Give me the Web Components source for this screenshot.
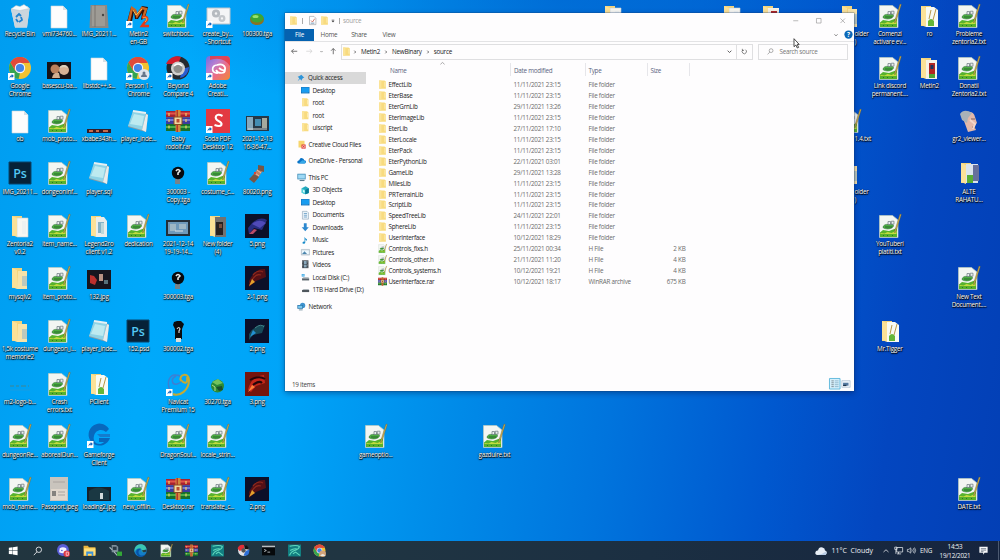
<!DOCTYPE html>
<html lang="en">
<head>
<meta charset="utf-8">
<title>Desktop</title>
<style>
  body {
    margin: 0;
    width: 1000px;
    height: 560px;
    overflow: hidden;
    font-family: "Open Sans", "Noto Sans", sans-serif;
    font-size: 6.3px;
    letter-spacing: -.25px;
  }
</style>
</head>
<body>
<desk-top>
  <explorer-window slot="window"></explorer-window>
  <task-bar slot="taskbar"></task-bar>
</desk-top>

<script>
(() => {
  const folderBack = `<path d="M4 2h7v20l-7-1.500z" fill="#e9c766"/><path d="M4 2h10v20H4z" fill="#f3d37b"/>`;
  const shortcut = `<path d="M0 17h6.500v7H0z" fill="#fff"/><path d="M1.500 22.500c0-2 .8-3 2.200-3.200v-1.300l2.200 2-2.200 2v-1.200c-1 0-1.600.5-2.200 1.700z" fill="#1668c0"/>`;
  const chrome = `<circle cx="12" cy="12" r="11" fill="#f1c232"/><path d="M2.500 6.500A11 11 0 0 1 21.500 6.500H12z" fill="#e04a3a"/><path d="M2.500 6.500 7.300 14.800 12 17l-1.500 5.900A11 11 0 0 1 2.500 6.500z" fill="#35a552"/><path d="M2.500 6.500 7.500 15 12 7h9.500a11 11 0 0 0-19-.5z" fill="#e04a3a"/><circle cx="12" cy="12" r="5.200" fill="#f4f6fa"/><circle cx="12" cy="12" r="4.100" fill="#4385e8"/>`;
  const rar = `<path d="M0 2h24v6.500H0z" fill="#a82230"/><path d="M0 3.500h24v2H0z" fill="#e2564c"/><path d="M0 8.500h24V15H0z" fill="#3c3ca0"/><path d="M0 10h24v2H0z" fill="#6f7bd8"/><path d="M0 15h24v7H0z" fill="#14702c"/><path d="M0 17h24v2H0z" fill="#4fb04a"/><path d="M9.500 1h5v22h-5z" fill="#d08a3c"/><path d="M10.500 1h1.500v22h-1.500z" fill="#b7372a"/><path d="M8 8h8v7.500H8z" fill="#f0d8a0" stroke="#8a4d22"/><path d="M10.500 10h3v3.500h-3z" fill="#ba4d32"/><path d="M3 4v3M3 10v3M3 16.500v3M20 4v3M20 10v3M20 16.500v3" stroke="#f4cf67" stroke-width="1.200"/>`;
  const npp = `<path d="M1.500 1.500h13l5.500 4.500v17.500H1.500z" fill="#f3f6f2" stroke="#bccbc0" stroke-width=".7"/><path d="M2 18.500 5 16l6 1 8-3v9H2z" fill="#58b22c"/><path d="M2.500 19l4 .5 3-1.500 4 1 5-2.500V20H2.500z" fill="#c3dc3e"/><path d="M5 13.500c0-2.500 3-3.500 5-3 3-1.500 5.500-.5 5.500 1.500-1 3-7.500 4-10.500 1.500z" fill="#4cae42" stroke="#28702e" stroke-width=".6"/><path d="M10 7.500h2.500v3H10zM13.300 7.200h2.700v3h-2.700z" fill="#e8efed" stroke="#68757b" stroke-width=".7"/><path d="M7 13h7" stroke="#1d552a" stroke-width=".8"/><path d="M23.300.6 18 17l-1.300 2 .3-3L22 0z" fill="#d8b348" stroke="#5f5b3b" stroke-width=".4"/><path d="M5 21.500h1M9 21.500h1M14 21.500h1" stroke="#2f7322"/>`;
  const photo = (inner) => `<path d="M0 0h24v24H0z" fill="#0c1029"/>${inner}`;
  const folder = (inner) => `${folderBack}${inner}<path d="M4 2l5 2v19l-5-2z" fill="#fbe197"/>`;

  // every drawing sits on a 24x24 box
  const ICONS = {
    npp,
    rar,
    chrome: chrome + shortcut,
    bin: `<path d="M3 5 19 2l2.500 2.500L19 23.500H7z" fill="#e3e9ee"/><path d="M3 5l9 1.500 9.500-2L19 23.500H7z" fill="#cbd5dd"/><path d="M3 5l5-3.500 4 1 4-2 5.500 4-9.500 2z" fill="#f8fafb" stroke="#aebcc7" stroke-width=".5"/><path d="M8 13l3-3 2 2M13 13l1 3-3 2M10 18l-2-3" fill="none" stroke="#2383d0" stroke-width="1.800"/>`,
    file: `<path d="M4 2h12l4 4v18H4z" fill="#fdfdfd" stroke="#cbd6de" stroke-width=".6"/><path d="M16 2v4h4z" fill="#d6dfe5"/>`,
    scan: `<path d="M3.500 1H20l1.500 23h-19z" fill="#8c8985"/><path d="M5 2h13v20H5z" fill="#9e9b95"/><path d="M8 1v22" stroke="#716d67" stroke-width=".8"/><circle cx="16" cy="11" r="1.200" fill="#474544"/>`,
    metin: `<path d="M1 18 5 3l5 3 1 4 5-8 6 1-3 11-4 2 1-7-4 6h-3L8 8l-2 9z" fill="#331007"/><path d="M3 17 6 4l3 2 2 6 5-8 4 1-3 9" fill="none" stroke="#c96524" stroke-width="2.400"/><path d="M7 6l3 5 6-6" stroke="#f1bd51" fill="none"/><path d="M16 14c5-3 7 1 3 4l-3 4h7" fill="none" stroke="#e43b18" stroke-width="2.500"/><path d="M17 14c4-2 5 1 2 4" fill="none" stroke="#ffb33e"/>${shortcut}`,
    gears: `<path d="M1 4h23v16H1z" fill="#f4f5f6" stroke="#b9c3cb"/><circle cx="10" cy="9.500" r="2.700" fill="none" stroke="#b6bbc0" stroke-width="2.800"/><circle cx="16" cy="14.500" r="2.300" fill="none" stroke="#c3c7cb" stroke-width="2.300"/>${shortcut}`,
    green: `<ellipse cx="12" cy="15.500" rx="7" ry="5.500" fill="#8a7224"/><ellipse cx="12" cy="14" rx="6.500" ry="4.500" fill="#3ca536"/><ellipse cx="10.500" cy="12.500" rx="3" ry="1.500" fill="#96e36d"/>`,
    faces: `<path d="M0 6h24v17H0z" fill="#171216"/><circle cx="8" cy="13" r="4.500" fill="#ba815e"/><path d="M5 22q1-6 7-5l1 5z" fill="#d1ae91"/><circle cx="17" cy="14" r="5" fill="#d7b296"/><path d="M12 12c2-4 8-4 9 0l-4-1z" fill="#ddd2bd"/>`,
    person: `${chrome}<circle cx="18" cy="18.500" r="5.500" fill="#dfe4ec"/><circle cx="18" cy="17" r="1.500" fill="#66758a"/><path d="M15 21c0-4 6-4 6 0z" fill="#66758a"/>${shortcut}`,
    compare: `<circle cx="12" cy="12" r="11.500" fill="#252a2f"/><path d="M0 8A12 12 0 0 1 15 1l-3 7z" fill="#d31f2e"/><path d="M14 22a11 11 0 0 0 9-11l-7 2z" fill="#295ed2"/><circle cx="12" cy="12.500" r="7" fill="#d0d0ce"/><circle cx="12" cy="12.500" r="4.500" fill="#8d8e8b"/><path d="M8 10q4-4 8 0" stroke="#fff" stroke-width="1.500" fill="none"/>${shortcut}`,
    adobe: `<defs><linearGradient id="a" x2="1" y2="1"><stop stop-color="#6d6be0"/><stop offset=".35" stop-color="#b97fd0"/><stop offset=".6" stop-color="#ec6c86"/><stop offset="1" stop-color="#f08a34"/></linearGradient></defs><rect width="24" height="24" rx="4" fill="url(#a)"/><path d="M4 0h16q4 0 4 4v6Q17 0 4 4z" fill="#e43d45" opacity=".85"/><path d="M12 17c-7 1-7-8-1-8 5-2 9 1 8 5 0 4-7 4-9 0m3-2q5 4 6 1" fill="none" stroke="#fff" stroke-width="1.700"/>${shortcut}`,
    banner: `<path d="M0 20h24v4H0z" fill="#331c28"/><path d="M2 21h4v2H2zM9 21h3v2H9zM16 21h5v2h-5z" fill="#c66b4d"/>`,
    notes: `<path d="M7 2l15 3-2 18-18-5z" fill="#8a9ca5"/><path d="M7 2l13 2-4 17-14-4z" fill="#8fd3e6"/><path d="M8 5l10 2-2 10-12-2z" fill="#bdeaf0"/><path d="M7 2l13 2" stroke="#e6f0f3" stroke-width="2"/><path d="M20 5l2 1-2 17-4-2z" fill="#e8ecec"/>`,
    soda: `<path d="M0 0h24v24H0z" fill="#e23a42"/><path d="M16.500 7c-7-4-9 3-4 5s4 7-4 4" fill="none" stroke="#fff" stroke-width="2.100"/>${shortcut}`,
    shot: `<path d="M1 7h23v15H1z" fill="#273846"/><path d="M2 8h6v13H2z" fill="#86a9bd"/><path d="M10 10h6v7h-6z" fill="#438db3"/><path d="M17 9h5v10h-5z" fill="#a7a99d"/><path d="M3 20h19" stroke="#d5d7d5"/>`,
    shot2: `<path d="M0 6h24v16H0z" fill="#222f39"/><path d="M2 8h20v12H2z" fill="#6e99ba"/><path d="M4 10h6v7H4zM13 10h7v5h-7z" fill="#9db7c5"/><path d="M9 17h8" stroke="#dae1e5"/>`,
    ps: `<path d="M1 1h22v22H1z" fill="#062238" stroke="#07446c" stroke-width="1"/><text x="12" y="16.500" text-anchor="middle" font-family="Open Sans" font-weight="600" font-size="12.500" fill="#54c9f4">Ps</text>`,
    orb: `<path d="M9 18h5v5H9z" fill="#76838a"/><circle cx="12" cy="12" r="6.200" fill="#080a0e"/><path d="M10 10q2-3 4 0l-2 2v2" fill="none" stroke="#e7e7e5" stroke-width="1.600"/>`,
    totem: `<path d="M5 18 15 5l4 3-9 13z" fill="#b98368"/><path d="M4 18l5-5 5 3-5 6zM13 4l6 1v6l-6-2z" fill="#765646"/><path d="M12 9l4 3M10 12l4 3" stroke="#f0baa0"/><path d="M9 11h2v2H9z" fill="#d8453a"/>`,
    folder: folder(`<path d="M10 5h9v18H9z" fill="#f7e3a9"/><path d="M14 10h5v10h-5z" fill="#bdc9bd"/>`),
    folderPaper: folder(`<path d="M9 4h11v19H9z" fill="#f7f7f2" stroke="#c9d0d2" stroke-width=".6"/><path d="M14 7h4v13h-4z" fill="#eef2f1"/>`),
    folderDocs: folder(`<path d="M9 3h8l3 4v16H9z" fill="#e9edeb"/><path d="M11 8h6v11h-6z" fill="#86b3c6"/><path d="M14 9h3v11h-3z" fill="#bbd8dc"/>`),
    folderDark: folder(`<path d="M9 3h11v20H9z" fill="#737270"/><path d="M10 8h7v13h-7z" fill="#272122"/><path d="M13 10h3v4h-3z" fill="#764d3d"/>`),
    folderNpp: folder(`<path d="M9 3h8l4 3v17H9z" fill="#f8faf3"/><path d="M11 17q3-4 6 0v5h-6z" fill="#64b638"/><path d="M19 5l-3 11M14 6l-2 9" stroke="#b79849"/>`),
    folderRed: folder(`<path d="M9 4h11v19H9z" fill="#f6f2e8"/><path d="M12 7h6v11h-6z" fill="#b32623"/><path d="M13.500 9h3v4h-3z" fill="#1b345e"/><path d="M12 18h6v4h-6z" fill="#4fa434"/>`),
    folderAlte: folder(`<path d="M9 3h12v19H9z" fill="#dbe4ed"/><path d="M16 4h6v16h-6z" fill="#66709c"/><path d="M10 14h6v8h-6z" fill="#5aad36"/>`),
    p5: photo(`<path d="M3 14Q12 1 22 6l-5 10-8-2-5 6z" fill="#282d82"/><path d="M7 10q7-6 14-1l-6 5z" fill="#504ab8"/><path d="M4 20l5-5 3 1-4 4z" fill="#b94c69"/>`),
    p24: photo(`<path d="M4 15Q10 2 20 3l1 8-10 4-7 6z" fill="#541015"/><path d="M8 9q5-6 10-3M7 14q4-7 9-5" stroke="#8f2a1d" stroke-width="1.200" fill="none"/><path d="M4 20l3-7 3 3z" fill="#e4a02c"/>`),
    p2: photo(`<path d="M4 15Q10 5 20 6l-3 8-9 2-4 5z" fill="#174a59"/><path d="M5 18l3-7 3 3z" fill="#238fd2"/><path d="M10 9q6-5 9-1" stroke="#428186" fill="none"/>`),
    p3: `<path d="M0 0h24v24H0z" fill="#75150d"/><path d="M3 18Q6 4 19 3l1 8-9 3-5 6z" fill="#c4271a"/><path d="M5 8q9-5 15-1M8 13q6-5 9-2" stroke="#23070b" stroke-width="2" fill="none"/><path d="M3 20l4-7 3 2z" fill="#ff813a"/>`,
    p132: `<path d="M0 4h24v19H0z" fill="#17151e"/><path d="M3 9l4 1 3 4-2 5-5-2z" fill="#bd302d"/><path d="M12 8h4v7h-4z" fill="#b99385"/><path d="M17 14h4v4h-4z" fill="#58717a"/>`,
    shirt: `<path d="M8 3l3-1h4l3 3-2 5v10H9V10L7 6z" fill="#0b0c0e"/><path d="M10 19h5v4h-5z" fill="#dcded9"/><path d="M11 10q2-3 3 0l-1 2v2" fill="none" stroke="#d4d4d4" stroke-width="1.200"/>`,
    logo: `<path d="M2 14h4M8 14h3M13 14h5M20 14h1" stroke="#2c8eb0" stroke-width="1.500"/><path d="M2 18h20" stroke="#229bd9" stroke-width=".7"/>`,
    navicat: `<path d="M4 18C0 10 4 2 10 3c6 0 8 7 1 9-5 1-7-5-1-8" fill="none" stroke="#3d7fd3" stroke-width="1.500"/><path d="M15 9c-3-7 8-9 8-1 0 10-9 17-16 14m8-14c4 5 7 3 6-3" fill="none" stroke="#c4ab32" stroke-width="2"/>${shortcut}`,
    emerald: `<circle cx="11.500" cy="14" r="6.500" fill="#2c8a35"/><path d="M6 10l6-3 5 4-6 2z" fill="#72c25d"/><path d="M10 15l6-1 1 4-4 1z" fill="#19502d"/><path d="M6 13l3 2v4" stroke="#b8dc89" fill="none"/>`,
    gforge: `<path d="M22 5A11 11 0 1 0 23 14H12v4h5c-5 5-12 0-10-6 1-6 8-8 12-4z" fill="#0868bd"/><path d="M10 10h13v3H13z" fill="#147ccd"/>${shortcut}`,
    passport: `<path d="M3 0h18v24H3z" fill="#c9c4bd"/><path d="M4 12h16v11H4z" fill="#e1d7cc"/><path d="M5 14h4v5H5z" fill="#85827e"/><path d="M11 15h7M11 18h7M6 5h12" stroke="#aaa4a0"/>`,
    loading: `<path d="M0 10h24v14H0z" fill="#16212b"/><path d="M2 14q9-7 20 0v9H2z" fill="#1a3843"/><path d="M13 16h3v6h-3z" fill="#d2dadc"/>`,
    granny: `<path d="M5 8Q5 3 9 3q8-1 9 5l2 6-3 3 2 4-8 2-4-11z" fill="#e3b9aa"/><path d="M3 5q4-6 12-1l-4 5-1 5-5-3z" fill="#a9b2b8"/><path d="M14 10h4M15 18l3 1" stroke="#80635e"/><path d="M13 11l5 4-2 5" fill="none" stroke="#f3d7ca" stroke-width="2"/>`,

    // window and taskbar glyphs
    tree: `<path d="M3 1h14l4 3v19H3z" fill="#f8db80"/><path d="M3 1h6v22H3z" fill="#fbe498"/><path d="M18.500 5v13" stroke="#fff3c4" stroke-width="2"/>`,
    check: `<path d="M4 1h12l5 5v17H4z" fill="#fff" stroke="#8e9499" stroke-width="1.500"/><path d="M8 12l4 4 6-9" fill="none" stroke="#c45242" stroke-width="2"/><path d="M7 19h10" stroke="#4c79a6" stroke-width="2"/>`,
    pin: `<path d="M13 2l9 9-4 1-3 4-1 4-5-5-7 7 5-9-5-5 4-1 5-3z" fill="#2e94d8"/>`,
    desk: `<path d="M0 3h24v18H0z" fill="#1172bd"/><path d="M1.500 4.500h21v13h-21z" fill="#189cf0"/><path d="M3 19.500h17" stroke="#8ed3ff"/>`,
    cloudcc: `<path d="M4 2h16v18H4z" fill="#f7d56d"/><path d="M12 12h11v11H12z" fill="#df3b35"/><circle cx="17.500" cy="17.500" r="3" fill="none" stroke="#fff" stroke-width="1.500"/>`,
    onedrive: `<path d="M2 19q-4-6 4-8 2-7 8-5 5 1 5 5 6 0 5 5-1 4-5 4H5z" fill="#0873c7"/><path d="M5 19l9-8q9 0 9 7l-3 2z" fill="#36a8e8"/>`,
    pc: `<path d="M1 2h22v15H1z" fill="#3988b4"/><path d="M3 4h18v11H3z" fill="#9ed9f5"/><path d="M7 20h13" stroke="#5e7d8e" stroke-width="3"/>`,
    cube: `<path d="M2 6l11-5 9 5v14l-9 3-11-4z" fill="#24a9bd"/><path d="M2 6l10 5v12L2 19z" fill="#50d3dc"/><path d="M12 11l10-5v14l-10 3z" fill="#087b97"/><path d="M6 11l4 2v6l-4-2z" fill="#eaffff"/>`,
    docs: `<path d="M4 1h13l4 4v18H4z" fill="#edf4f9" stroke="#7c97ad" stroke-width="1.500"/><path d="M8 7h9M8 12h9M8 17h9" stroke="#508cbd" stroke-width="2"/>`,
    down: `<path d="M8 1h8v11h6L12 23 2 12h6z" fill="#2c88cf"/>`,
    music: `<path d="M10 2q1 5 7 7-1 4-3 6 1-5-2-6v10q-1 4-5 3-5-1-2-5 2-2 5-1z" fill="#168ac9"/>`,
    pics: `<path d="M1 4h23v16H1z" fill="#cfd9df" stroke="#7a92a3"/><path d="M3 7h19v10H3z" fill="#eef9ff"/><path d="M3 17l7-8 7 8z" fill="#4d86ae"/>`,
    video: `<path d="M3 1h18v22H3z" fill="#31383f"/><path d="M8 3h8v8H8zM8 13h8v8H8z" fill="#8aa8bb"/><path d="M5 3v18M19 3v18" stroke="#c9ced2" stroke-width="2" stroke-dasharray="2 2"/>`,
    disk: `<path d="M3 15h20v6H3z" fill="#59636b"/><path d="M4 14l3-3h14l2 4z" fill="#bac3c9"/><path d="M2 3h8v7H2z" fill="#1c9be2"/><path d="M6 3v7M2 6.500h8" stroke="#fff"/>`,
    drive: `<path d="M3 14h20v6H3z" fill="#4e565c"/><path d="M4 14l3-3h14l2 3z" fill="#b0b8bd"/>`,
    network: `<circle cx="15" cy="9" r="7" fill="#3e92cd"/><path d="M1 8h15v10H1z" fill="#2876ac"/><path d="M3 10h11v6H3z" fill="#76c6ee"/><path d="M5 21h10" stroke="#577889" stroke-width="2"/>`,
    help: `<circle cx="12" cy="12" r="11" fill="#0c68b8"/><text x="12" y="18" text-anchor="middle" font-family="Open Sans" font-weight="700" font-size="17" fill="#fff">?</text>`,
    refresh: `<path d="M7 7a8 8 0 1 0 9-1M5 3v6h6" fill="none" stroke="#555" stroke-width="2.500"/>`,
    lens: `<circle cx="14" cy="9" r="6.500" fill="none" stroke="currentColor" stroke-width="2"/><path d="M9.500 14 2 22" stroke="currentColor" stroke-width="2"/>`,
    left: `<path d="M23 12H2M10 4l-8 8 8 8" fill="none" stroke="currentColor" stroke-width="3"/>`,
    right: `<path d="M1 12h21M14 4l8 8-8 8" fill="none" stroke="currentColor" stroke-width="2.500"/>`,
    upArrow: `<path d="M12 23V2M4 10l8-8 8 8" fill="none" stroke="currentColor" stroke-width="3"/>`,
    chevDown: `<path d="M3 8l9 9 9-9" fill="none" stroke="currentColor" stroke-width="4.500"/>`,
    chevRight: `<path d="M8 4l8 8-8 8" fill="none" stroke="currentColor" stroke-width="4"/>`,
    chevUp: `<path d="M2 16l10-9 10 9" fill="none" stroke="currentColor" stroke-width="3"/>`,
    menuArrow: `<path d="M4 5h16M5 11h14l-7 8z" fill="currentColor" stroke="currentColor" stroke-width="2"/>`,
    min: `<path d="M1 12h22" stroke="currentColor" stroke-width="2.500"/>`,
    max: `<path d="M2 2h20v20H2z" fill="none" stroke="currentColor" stroke-width="2.500"/>`,
    close: `<path d="M2 2l20 20M22 2 2 22" stroke="currentColor" stroke-width="2.500"/>`,
    detailView: `<path d="M1 1h22v22H1z" fill="#d6f0fc" stroke="#62b9dc" stroke-width="2"/><path d="M5 6h5M5 10h5M5 14h5M5 18h5" stroke="#7f8e97" stroke-width="2"/><path d="M12 6h8M12 10h8M12 14h8M12 18h8" stroke="#4c7e9c"/>`,
    largeView: `<path d="M2 4h20v16H2z" fill="#edf4fb" stroke="#a5b8cb" stroke-width="1.500"/><path d="M5 9h13v7H5z" fill="#54789f"/><path d="M5 14h8v3H5z" fill="#1d354e"/>`,
    win: `<path d="M2 4l9-1v8H2zM12 3l11-2v10H12zM2 12h9v8l-9-1zM12 12h11v10l-11-1.500z" fill="#fff"/>`,
    discord: `<circle cx="11" cy="11" r="11" fill="#5a5ed8"/><path d="M5 8q6-4 12 0l1 7q-7 4-14 0z" fill="#f1f2ff"/><circle cx="9" cy="12" r="1.500" fill="#5a5ed8"/><circle cx="18" cy="18" r="6" fill="#da3845"/><path d="M17 15h4v6h-4z" fill="none" stroke="#ffcdd1" stroke-width="1.500"/>`,
    files: `<path d="M1 3h8l2 3h12v16H1z" fill="#e9b43e"/><path d="M2 8h21v12H2z" fill="#ffdf79"/><path d="M6 14h13v8h-3v-4H9v4H6z" fill="#3e92d8"/>`,
    putty: `<path d="M5 2h8l4 3v10H5z" fill="#7c8d98"/><path d="M7 5h7v6H7z" fill="#293944"/><path d="M1 6l5 5M9 14l6 7" stroke="#aab8bd" stroke-width="2"/><path d="M15 14h9v8h-9z" fill="#33a837"/>`,
    edge: `<circle cx="12" cy="12" r="11.500" fill="#137ec8"/><path d="M1 10C4-3 22-2 23 10c0 6-8 7-9 3 2-7-10-8-13 2z" fill="#3bc6b1"/><path d="M9 12c-3 8 5 12 12 7-5 8-16 5-17-4 0-5 4-7 9-6z" fill="#0752a8"/><path d="M14 12l9-2q1 6-6 5z" fill="#253d49"/>`,
    serpent: `<path d="M0 1h24v22H0z" fill="#127e80"/><path d="M3 4q14-3 18 1-1 5-9 7-7 2-9 9M4 12q6-4 12-3M9 18l5-3 8 6" fill="none" stroke="#60d9bd" stroke-width="2"/>`,
    bc: `<circle cx="12" cy="12" r="10" fill="#e2e3e5"/><path d="M1 8Q5 0 13 2v7L5 13z" fill="#df2f37"/><path d="M13 2q8 0 9 8l-8-1z" fill="#111"/><path d="M12 21q11 3 11-11l-7 3z" fill="#2c6fd8"/><circle cx="12" cy="12" r="4" fill="#555"/>`,
    cmd: `<path d="M0 3h24v18H0z" fill="#06090b"/><path d="M0 3h24v3H0z" fill="#b9bec1"/><path d="M4 10l4 2-4 2M10 15h5" fill="none" stroke="#d0d5d8" stroke-width="1.500"/>`,
    chromeTask: `${chrome}<circle cx="18" cy="18" r="6" fill="#cfa27a"/><path d="M13 22q5-7 10 0z" fill="#e8e5dc"/>`,
    cloud: `<path d="M5 20q-6-1-4-6 1-4 5-3 2-8 9-6 5 1 5 6 5 2 3 6-1 3-4 3z" fill="#e7eef6"/><path d="M5 20q9-1 17-7 3 5-2 7z" fill="#b9cee8"/>`,
    net: `<path d="M7 4h16v12H7zM12 16v5M8 21h11" fill="none" stroke="#e6eaee" stroke-width="2"/><path d="M2 3h6v6H2zM5 9v12" fill="none" stroke="#e6eaee" stroke-width="2"/>`,
    sound: `<path d="M1 9h4l5-4v14l-5-4H1z" fill="none" stroke="#e6eaee" stroke-width="1.800"/><path d="M13 9q2 3 0 6M17 6q4 6 0 12M20 4q6 8 0 16" fill="none" stroke="#e6eaee" stroke-width="1.800"/>`,
    notice: `<path d="M1 2h22v16h-8l-4 5v-5H1z" fill="#f6f7f9"/><path d="M5 7h14M5 11h14M5 15h7" stroke="#303c4c" stroke-width="1.500"/>`,
  };

  // [column, row, icon, label, cut]; "|" breaks the label, cut labels start at the window's edge
  const SHORTCUTS = [
    [0, 0, "bin", "Recycle Bin"], [1, 0, "file", "vmi734760..."], [2, 0, "scan", "IMG_20211..."],
    [3, 0, "metin", "Metin2|en-GB"], [4, 0, "npp", "switchbot..."], [5, 0, "gears", "create_by...|- Shortcut"], [6, 0, "green", "100300.tga"],
    [0, 1, "chrome", "Google|Chrome"], [1, 1, "faces", "basescu-ba..."], [2, 1, "file", "libstdc++.s..."],
    [3, 1, "person", "Person 1 -|Chrome"], [4, 1, "compare", "Beyond|Compare 4"], [5, 1, "adobe", "Adobe|Creati..."],
    [0, 2, "file", "ob"], [1, 2, "npp", "mob_proto..."], [2, 2, "banner", "xbabe343h..."], [3, 2, "notes", "player_inde..."],
    [4, 2, "rar", "Baby|rodolf.rar"], [5, 2, "soda", "Soda PDF|Desktop 12"], [6, 2, "shot", "2021-12-13|16-36-47..."],
    [0, 3, "ps", "IMG_20211..."], [1, 3, "npp", "dongeonInf..."], [2, 3, "notes", "player.sql"],
    [4, 3, "orb", "300003 -|Copy.tga"], [5, 3, "npp", "costume_c..."], [6, 3, "totem", "80020.png"],
    [0, 4, "folderPaper", "Zentoria2|v0.2"], [1, 4, "npp", "item_name..."], [2, 4, "folderDocs", "Legend2ro|client v1.2"],
    [3, 4, "npp", "dedication"], [4, 4, "shot2", "2021-12-14|19-19-14..."], [5, 4, "folderDark", "New folder|(4)"], [6, 4, "p5", "5.png"],
    [0, 5, "folder", "mysqlv2"], [1, 5, "npp", "item_proto..."], [2, 5, "p132", "132.jpg"], [4, 5, "orb", "300003.tga"], [6, 5, "p24", "2-1.png"],
    [0, 6, "folder", "1,5k costume|memorie2"], [1, 6, "npp", "dungeon_i..."], [2, 6, "notes", "player_inde..."], [3, 6, "ps", "152.psd"], [4, 6, "shirt", "300002.tga"], [6, 6, "p2", "2.png"],
    [0, 7, "logo", "m2-logo-b..."], [1, 7, "npp", "Crash|errors.txt"], [2, 7, "folderNpp", "PClient"], [4, 7, "navicat", "Navicat|Premium 15"], [5, 7, "emerald", "30270.tga"], [6, 7, "p3", "3.png"],
    [0, 8, "npp", "dungeonRe..."], [1, 8, "npp", "aboreaIDun..."], [2, 8, "gforge", "Gameforge|Client"], [4, 8, "npp", "DragonSoul..."], [5, 8, "npp", "locale_strin..."],
    [9, 8, "npp", "gameoptio..."], [12, 8, "npp", "gazduire.txt"],
    [0, 9, "npp", "mob_name..."], [1, 9, "passport", "Passport.jpeg"], [2, 9, "loading", "loading2.jpg"], [3, 9, "npp", "new_offlin..."], [4, 9, "rar", "Desktop.rar"], [5, 9, "npp", "translate_c..."], [6, 9, "p24", "2.png"],
    [15, 0, "folderPaper", ""], [18, 0, "folderPaper", ""], [19, 0, "folderRed", ""],
    [21, 0, "folder", "older|)", "cut"], [21, 2, "npp", "1.4.txt", "cut"], [21, 3, "folder", "older|)", "cut"],
    [22, 0, "npp", "Comenzi|activare ev..."], [23, 0, "folderNpp", "ro"], [24, 0, "npp", "Probleme|zentoria2.txt"],
    [22, 1, "npp", "Link discord|permanent...."], [23, 1, "folderRed", "Metin2"], [24, 1, "npp", "Donatii|Zentoria2.txt"],
    [24, 2, "granny", "gr2_viewer..."], [24, 3, "folderAlte", "ALTE|RAHATU..."],
    [22, 4, "npp", "YouTuberi|platiti.txt"], [24, 5, "npp", "New Text|Document...."], [22, 6, "folderNpp", "Mr.Tigger"], [24, 9, "npp", "DATE.txt"],
  ];

  const NAV = [
    ["pin", "Quick access", "active"], ["desk", "Desktop", "child"], ["tree", "root", "child"], ["tree", "root", "child"], ["tree", "uiscript", "child"],
    ["cloudcc", "Creative Cloud Files", "top"], ["onedrive", "OneDrive - Personal", "top"], ["pc", "This PC", "top"],
    ["cube", "3D Objects", "child"], ["desk", "Desktop", "child"], ["docs", "Documents", "child"], ["down", "Downloads", "child"],
    ["music", "Music", "child"], ["pics", "Pictures", "child"], ["video", "Videos", "child"], ["disk", "Local Disk (C:)", "child"],
    ["drive", "1TB Hard Drive (D:)", "child"], ["network", "Network", "top"],
  ];

  const FILES = [
    ["EffectLib", "11/11/2021 23:15"], ["EterBase", "11/11/2021 23:15"], ["EterGrnLib", "29/11/2021 13:26"],
    ["EterImageLib", "11/11/2021 23:15"], ["EterLib", "27/11/2021 17:10"], ["EterLocale", "11/11/2021 23:15"],
    ["EterPack", "11/11/2021 23:15"], ["EterPythonLib", "22/11/2021 03:01"], ["GameLib", "29/11/2021 13:28"],
    ["MilesLib", "11/11/2021 23:15"], ["PRTerrainLib", "11/11/2021 23:15"], ["ScriptLib", "11/11/2021 23:15"],
    ["SpeedTreeLib", "24/11/2021 22:01"], ["SphereLib", "11/11/2021 23:15"], ["UserInterface", "10/12/2021 18:29"],
    ["Controls_fixs.h", "25/11/2021 00:34", "H File", "2 KB", "npp"],
    ["Controls_other.h", "21/11/2021 11:20", "H File", "4 KB", "npp"],
    ["Controls_systems.h", "10/12/2021 19:21", "H File", "4 KB", "npp"],
    ["UserInterface.rar", "10/12/2021 18:17", "WinRAR archive", "675 KB", "rar"],
  ];

  const TASKS = ["win", "lens", "discord", "files", "putty", "edge", "npp", "rar", "serpent", "bc", "cmd", "serpent", "chromeTask"];

  class UiIcon extends HTMLElement {
    connectedCallback() {
      if (this.shadowRoot) return;
      this.attachShadow({ mode: "open" }).innerHTML = `
        <style>
          :host { display: block; flex: none; width: var(--size, 9px); height: var(--size, 9px); }
          svg { display: block; width: 100%; height: 100%; overflow: visible; }
        </style>
        <svg viewBox="0 0 24 24">${ICONS[this.getAttribute("name")] || ""}</svg>
      `;
    }
  }

  class DesktopIcon extends HTMLElement {
    connectedCallback() {
      if (this.shadowRoot) return;
      this.attachShadow({ mode: "open" }).innerHTML = `
        <style>
          :host { display: flex; flex-direction: column; align-items: center; min-width: 0; padding-top: 3.500px; --size: 24px; }
          .label {
            margin-top: 2.300px; text-align: center; white-space: nowrap; line-height: 8px; color: #fff;
            text-shadow: .6px .6px .8px #000, 0 0 1px #000, 0 1px 1.500px rgba(0,0,0,.5);
          }
          :host([cut]) .label { align-self: flex-start; margin-left: 24px; text-align: left; }
        </style>
        <ui-icon name="${this.getAttribute("icon")}"></ui-icon>
        <div class="label"><slot></slot></div>
      `;
    }
  }

  class DeskTop extends HTMLElement {
    connectedCallback() {
      if (this.shadowRoot) return;
      const icons = SHORTCUTS.map(([col, row, icon, label, cut = ""]) => `
        <desktop-icon icon="${icon}" ${cut} style="grid-column:${col + 1};grid-row:${row + 1}">${label.replace("|", "<br>")}</desktop-icon>`).join("");
      this.attachShadow({ mode: "open" }).innerHTML = `
        <style>
          :host {
            display: flex; flex-direction: column; position: relative; height: 560px; overflow: hidden;
            background:
              radial-gradient(ellipse 420px 130px at 560px 0, rgba(0,86,200,.5), transparent),
              linear-gradient(98deg, #009df0 0, #00a9fb 18%, #00a4f8 32%, #008ce9 47%, #0074dd 62%, #0058cf 77%, #0346c0 88%, #033fb5 100%);
          }
          .grid { flex: 1; min-height: 0; display: grid; grid-template-columns: repeat(25, 39.560px); grid-template-rows: repeat(10, 52.600px); }
        </style>
        <div class="grid">${icons}</div>
        <slot name="window"></slot>
        <slot name="taskbar"></slot>
      `;
    }
  }

  class NavItem extends HTMLElement {
    connectedCallback() {
      if (this.shadowRoot) return;
      this.attachShadow({ mode: "open" }).innerHTML = `
        <style>
          :host { display: flex; align-items: center; gap: 3px; height: 12.480px; padding-left: 12px; white-space: nowrap; color: #222; --size: 8px; }
          :host([kind="top"]) { margin-top: 4.150px; gap: 2.500px; --size: 9px; }
          :host([kind="child"]) { padding-left: 16px; --size: 8.500px; }
          :host([kind="active"]) { background: #d9d9d9; }
        </style>
        <ui-icon name="${this.getAttribute("icon")}"></ui-icon><slot></slot>
      `;
    }
  }

  class FileRow extends HTMLElement {
    connectedCallback() {
      if (this.shadowRoot) return;
      this.attachShadow({ mode: "open" }).innerHTML = `
        <style>
          :host { display: grid; grid-template-columns: 135.500px 75px 62px 35px; align-items: center; height: 10.930px; white-space: nowrap; color: #6b6b6b; --size: 9px; }
          .name { display: flex; align-items: center; gap: 1.500px; color: #1c1c1c; }
          .size { text-align: right; }
        </style>
        <div class="name"><ui-icon name="${this.getAttribute("icon")}"></ui-icon><slot></slot></div>
        <slot name="date"></slot><slot name="type"></slot><div class="size"><slot name="size"></slot></div>
      `;
    }
  }

  class ExplorerWindow extends HTMLElement {
    connectedCallback() {
      if (this.shadowRoot) return;
      const nav = NAV.map(([icon, label, kind]) => `<nav-item icon="${icon}" kind="${kind}">${label}</nav-item>`).join("");
      const rows = FILES.map(([name, date, type = "File folder", size = "", icon = "tree"]) => `
        <file-row icon="${icon}">${name}<span slot="date">${date}</span><span slot="type">${type}</span><span slot="size">${size}</span></file-row>`).join("");
      this.attachShadow({ mode: "open" }).innerHTML = `
        <style>
          :host {
            position: absolute; left: 285px; top: 13px; width: 569px; height: 377.500px; box-sizing: border-box;
            display: flex; flex-direction: column; background: #fefdfe; color: #333;
            box-shadow: 0 0 0 .5px rgba(20,60,110,.5), 0 2px 6px rgba(0,10,60,.4);
          }
          .row { display: flex; align-items: center; flex: none; white-space: nowrap; }
          .title { height: 15.500px; padding: 0 9px 0 4px; gap: 4px; color: #a0a0a0; }
          .title i { width: 1px; height: 6px; background: #aaa; }
          .title .fill { flex: 1; }
          .controls { display: flex; align-items: center; gap: 18px; --size: 5.500px; color: #888; }
          .tabs { height: 12px; border-bottom: 1px solid #e3e3e5; color: #555; }
          .tabs b { width: 29px; height: 12px; line-height: 12px; text-align: center; background: #0562b0; color: #fff; font-weight: 400; }
          .tabs span { width: 30px; text-align: center; }
          .tabs .extra { margin-left: auto; display: flex; align-items: center; gap: 6px; padding-right: 1.500px; }
          .path { height: 20px; padding: 0 6px; color: #555; }
          .arrows { display: flex; align-items: center; width: 50px; gap: 8px; --size: 6.500px; }
          .box { display: flex; align-items: center; height: 14px; border: 1px solid #dfdfe1; box-sizing: content-box; }
          .addr { width: 412px; gap: 4px; padding-left: 0; box-sizing: border-box; height: 16px; color: #222; }
          .addr .reload { margin-left: auto; display: flex; align-items: center; gap: 4.500px; color: #555; }
          .addr .cell { border-left: 1px solid #dfdfe1; height: 14px; width: 15px; display: grid; place-items: center; }
          .search { margin-left: auto; width: 90px; height: 16px; gap: 6px; padding-left: 7.500px; box-sizing: border-box; color: #777; --size: 7px; }
          .main { flex: 1; display: flex; min-height: 0; }
          nav { width: 81px; padding-top: 10px; }
          .files { flex: 1; padding-left: 12px; }
          .head { position: relative; display: grid; grid-template-columns: 133px 74.500px 62px 42px; align-items: center; height: 14px; margin: .5px 0 3.400px; color: #5c6480; }
          .head span { padding-left: 3px; height: 13px; line-height: 15px; border-right: 1px solid #e6e6ea; }
          .head ui-icon { position: absolute; left: 61.500px; top: -1px; --size: 5px; color: #777; }
          .status { height: 13px; padding: 0 3px 0 7px; gap: 1px; color: #444; }
          .status .fill { flex: 1; }
        </style>
        <div class="row title">
          <ui-icon name="tree"></ui-icon><i></i><ui-icon name="check" style="margin-left:1px"></ui-icon><ui-icon name="tree" style="margin-left:-1px"></ui-icon>
          <ui-icon name="menuArrow" style="--size:4px;color:#333;margin-left:-2px"></ui-icon><i></i><span style="margin-left:-1px">source</span>
          <div class="fill"></div>
          <div class="controls"><ui-icon name="min"></ui-icon><ui-icon name="max"></ui-icon><ui-icon name="close"></ui-icon></div>
        </div>
        <div class="row tabs">
          <b>File</b><span>Home</span><span>Share</span><span>View</span>
          <div class="extra"><ui-icon name="chevDown" style="--size:4px"></ui-icon><ui-icon name="help"></ui-icon></div>
        </div>
        <div class="row path">
          <div class="arrows"><ui-icon name="left"></ui-icon><ui-icon name="right" style="color:#ccc"></ui-icon><ui-icon name="chevDown" style="--size:3px"></ui-icon><ui-icon name="upArrow" style="margin-left:-1px"></ui-icon></div>
          <div class="box addr">
            <ui-icon name="tree" style="margin-right:-2px"></ui-icon>
            <ui-icon name="chevRight" style="--size:4px"></ui-icon><span>Metin2</span>
            <ui-icon name="chevRight" style="--size:4px"></ui-icon><span>NewBinary</span>
            <ui-icon name="chevRight" style="--size:4px"></ui-icon><span>source</span>
            <div class="reload"><ui-icon name="chevDown" style="--size:5px"></ui-icon><div class="cell"><ui-icon name="refresh" style="--size:6.500px"></ui-icon></div></div>
          </div>
          <div class="box search"><ui-icon name="lens"></ui-icon>Search source</div>
        </div>
        <div class="main">
          <nav>${nav}</nav>
          <div class="files">
            <div class="head"><span style="padding-left:12px">Name</span><span>Date modified</span><span>Type</span><span>Size</span><ui-icon name="chevUp"></ui-icon></div>
            <div>${rows}</div>
          </div>
        </div>
        <div class="row status">19 items<div class="fill"></div><ui-icon name="detailView" style="--size:11.500px"></ui-icon><ui-icon name="largeView" style="--size:10px"></ui-icon></div>
      `;
    }
  }

  class MousePointer extends HTMLElement {
    connectedCallback() {
      if (this.shadowRoot) return;
      this.attachShadow({ mode: "open" }).innerHTML = `
        <style>
          :host { display: block; position: absolute; left: 793px; top: 37.500px; width: 7px; height: 11px; z-index: 5; }
          svg { display: block; }
        </style>
        <svg width="7" height="11" viewBox="0 0 7 11"><path d="M1 .7v8l1.900-1.700 1.400 3 1.300-.6-1.400-3h2z" fill="#fff" stroke="#222" stroke-width=".8"/></svg>
      `;
    }
  }

  class TaskBar extends HTMLElement {
    connectedCallback() {
      if (this.shadowRoot) return;
      this.attachShadow({ mode: "open" }).innerHTML = `
        <style>
          :host {
            display: flex; align-items: center; justify-content: space-between; flex: none; height: 19px; color: #f0f2f5; white-space: nowrap;
            background: linear-gradient(90deg, #21353f, #203542 35%, #1b2f42 65%, #16243e 100%);
          }
          .apps { display: flex; --size: 13px; }
          .apps div { width: 25.600px; display: grid; place-items: center; }
          .apps div:nth-child(-n+2) { --size: 10px; }
          .tray { display: flex; align-items: center; --size: 9px; }
          .temp { margin-left: 5px; width: 19px; font-size: 7px; letter-spacing: 0; }
          .sky { width: 32px; font-size: 7px; letter-spacing: 0; }
          .clock { text-align: center; line-height: 9px; width: 38px; }
        </style>
        <div class="apps">${TASKS.map((name) => `<div><ui-icon name="${name}"></ui-icon></div>`).join("")}</div>
        <div class="tray">
          <ui-icon name="cloud" style="--size:12px"></ui-icon><span class="temp">11°C</span><span class="sky">Cloudy</span>
          <ui-icon name="chevUp" style="--size:6px"></ui-icon>
          <ui-icon name="net" style="margin-left:5.500px"></ui-icon>
          <ui-icon name="sound" style="margin-left:4px"></ui-icon>
          <span style="margin-left:4px;width:16px">ENG</span>
          <div class="clock">14:53<br>19/12/2021</div>
          <ui-icon name="notice" style="margin:0 10px 0 5px"></ui-icon>
          <i style="width:1px;height:19px;margin-right:1px;background:#4b5970"></i>
        </div>
      `;
    }
  }

  const elements = {
    "ui-icon": UiIcon,
    "desktop-icon": DesktopIcon,
    "nav-item": NavItem,
    "file-row": FileRow,
    "explorer-window": ExplorerWindow,
    "mouse-pointer": MousePointer,
    "task-bar": TaskBar,
    "desk-top": DeskTop,
  };
  Object.entries(elements).forEach(([name, cls]) => {
    if (!customElements.get(name)) customElements.define(name, cls);
  });

  const pointer = document.createElement("mouse-pointer");
  document.body.append(pointer);
})();
</script>
</body>
</html>
